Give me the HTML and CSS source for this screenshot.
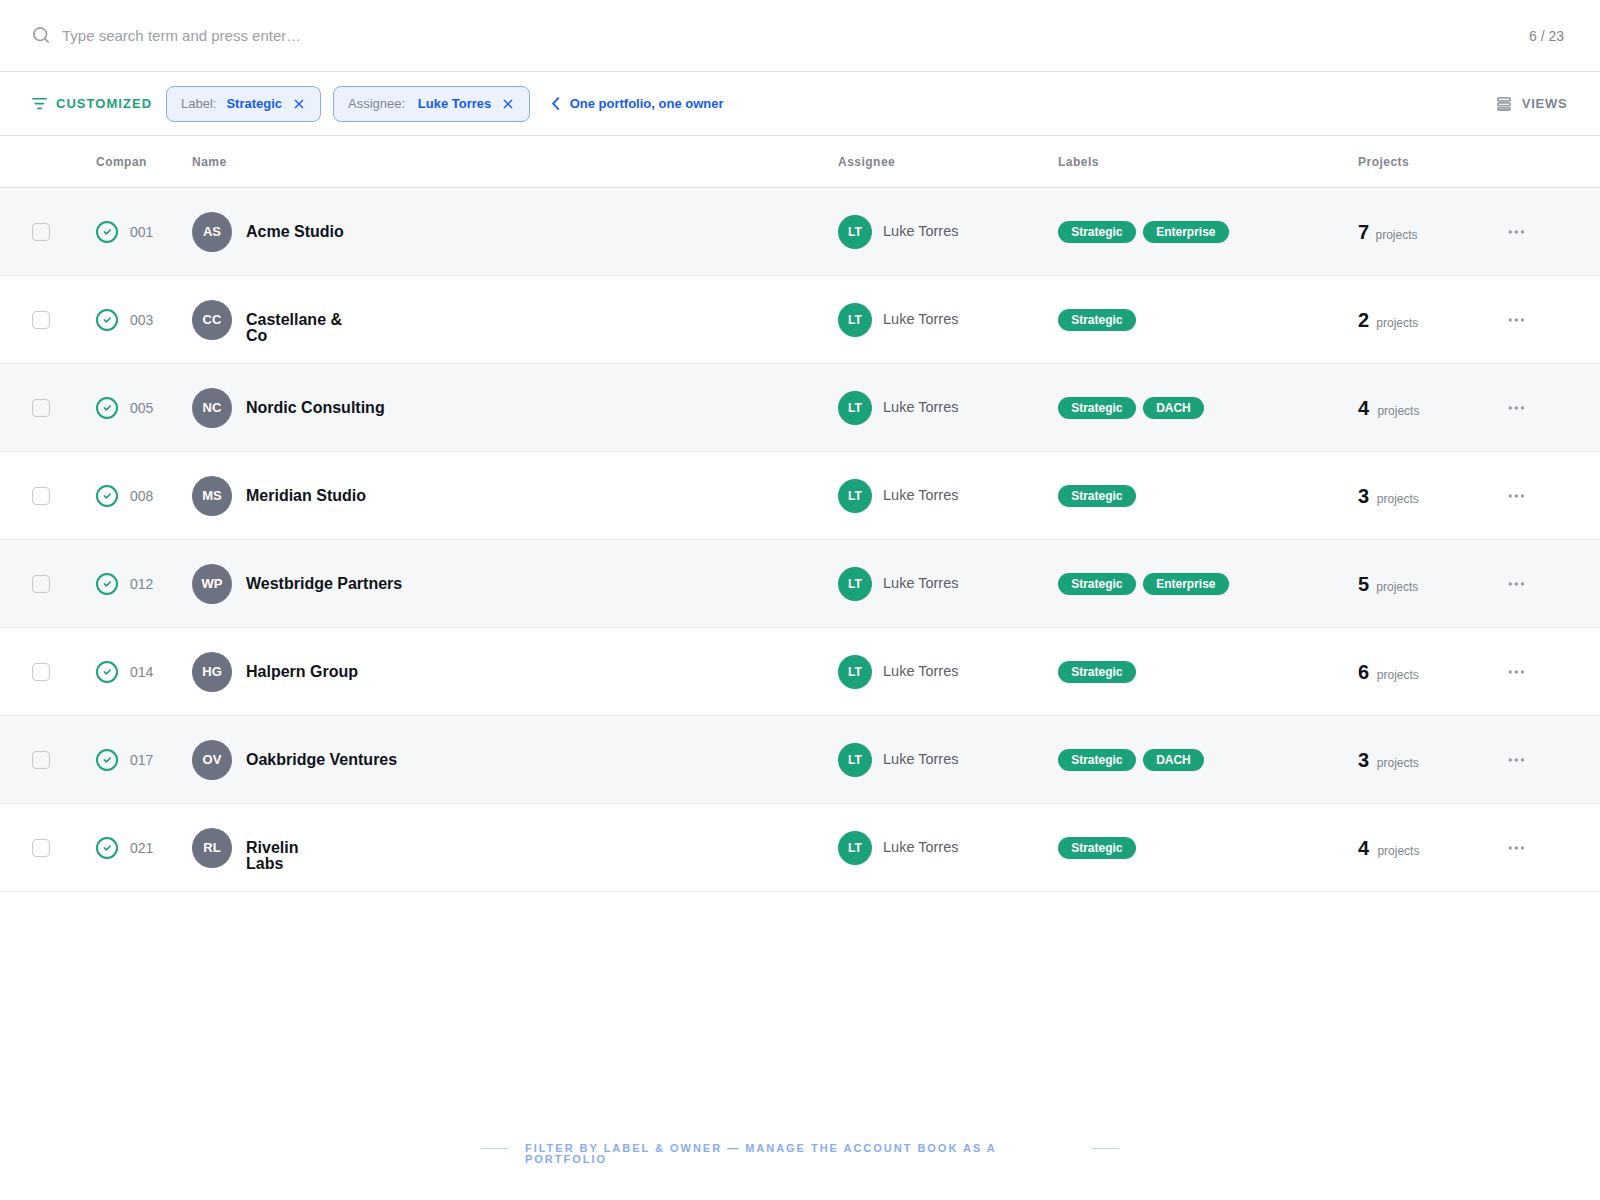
FILE: index.html
```html
<!DOCTYPE html>
<html lang="en">
<head>
  <meta charset="utf-8">
  <meta name="viewport" content="width=device-width">
  <title>Companies</title>
  <link rel="stylesheet" href="styles.css">
</head>
<body>
  <div class="search-bar">
    <svg class="search-icon" width="18" height="18" viewBox="0 0 18 18"><circle cx="7.2" cy="7.2" r="6.3"/><path d="M11.9 11.9L15.2 15.2"/></svg>
    <span class="placeholder">Type search term and press enter…</span>
    <span class="count">6 / 23</span>
  </div>

  <div class="filter-bar">
    <svg class="filter-icon" width="16" height="16" viewBox="0 0 16 16"><path d="M0.9 2.7h13.2M3.3 7.6h8.2M5.8 12.4h3.4"/></svg>
    <span class="customized">CUSTOMIZED</span>
    <div class="chip chip-label">
      <span class="key">Label:</span>
      <b>Strategic</b>
      <svg width="10" height="10" viewBox="0 0 10 10"><path d="M1 1l8 8M9 1l-8 8"/></svg>
    </div>
    <div class="chip chip-assignee">
      <span class="key">Assignee:</span>
      <b>Luke Torres</b>
      <svg width="10" height="10" viewBox="0 0 10 10"><path d="M1 1l8 8M9 1l-8 8"/></svg>
    </div>
    <svg class="back-icon" width="8" height="14" viewBox="0 0 8 14"><path d="M6.8 0.6L1.2 6.6l5.6 6"/></svg>
    <b class="hint">One portfolio, one owner</b>
    <svg class="views-icon" width="14" height="14" viewBox="0 0 14 14"><rect x="0.9" y="0.9" width="12.2" height="2.9" rx="1"/><rect x="0.9" y="5.8" width="12.2" height="2.9" rx="1"/><rect x="0.9" y="10.8" width="12.2" height="2.2" rx="1"/></svg>
    <span class="views">VIEWS</span>
  </div>

  <div class="table">
    <div class="row head">
      <span></span>
      <span>Compan</span>
      <span>Name</span>
      <span>Assignee</span>
      <span>Labels</span>
      <span>Projects</span>
      <span></span>
    </div>
  </div>

  <div class="footer">
    <i></i>
    <p>FILTER BY LABEL &amp; OWNER — MANAGE THE ACCOUNT BOOK AS A PORTFOLIO</p>
    <i></i>
  </div>

  <script>
  const companies = [
    { no: "001", initials: "AS", name: "Acme Studio", labels: ["Strategic", "Enterprise"], projects: 7 },
    { no: "003", initials: "CC", name: "Castellane &amp;<br>Co", labels: ["Strategic"], projects: 2 },
    { no: "005", initials: "NC", name: "Nordic Consulting", labels: ["Strategic", "DACH"], projects: 4 },
    { no: "008", initials: "MS", name: "Meridian Studio", labels: ["Strategic"], projects: 3 },
    { no: "012", initials: "WP", name: "Westbridge Partners", labels: ["Strategic", "Enterprise"], projects: 5 },
    { no: "014", initials: "HG", name: "Halpern Group", labels: ["Strategic"], projects: 6 },
    { no: "017", initials: "OV", name: "Oakbridge Ventures", labels: ["Strategic", "DACH"], projects: 3 },
    { no: "021", initials: "RL", name: "Rivelin<br>Labs", labels: ["Strategic"], projects: 4 },
  ];

  const table = document.querySelector(".table");

  companies.forEach(c => {
    const row = document.createElement("div");
    row.className = "row";
    row.innerHTML = `
      <span class="checkbox"></span>
      <div class="cell number">
        <svg width="22" height="22" viewBox="0 0 22 22"><circle cx="11" cy="11" r="10"/><path d="M8.4 10.9l2 2L14.4 9"/></svg>
        <span>${c.no}</span>
      </div>
      <div class="cell company">
        <span class="avatar">${c.initials}</span>
        <span class="name">${c.name}</span>
      </div>
      <div class="cell assignee">
        <span class="avatar small">LT</span>
        <span class="person">Luke Torres</span>
      </div>
      <div class="cell labels">${c.labels.map(l => `<span class="pill">${l}</span>`).join("")}</div>
      <div class="cell projects p${c.projects}"><b>${c.projects}</b><span>projects</span></div>
      <svg class="more" width="16" height="4" viewBox="0 0 16 4"><circle cx="2.2" cy="2" r="1.65"/><circle cx="8.3" cy="2" r="1.65"/><circle cx="14.4" cy="2" r="1.65"/></svg>`;
    table.appendChild(row);
  });
  </script>
</body>
</html>
```
FILE: styles.css
```css
*{
  box-sizing:border-box;
}
body{
  margin:0;
  height:1200px;
  background-color:#fff;
  font-family:"Liberation Sans", Arial, sans-serif;
  display:flex;
  flex-direction:column;
  overflow:hidden;
}
svg{
  fill:none;
  flex-shrink:0;
}
.search-bar{
  height:72px;
  padding:0 36px 0 32px;
  display:flex;
  align-items:center;
  border-bottom:1px solid #dddfe3;
}
.search-icon{
  stroke:#9ba0a9;
  stroke-width:1.7;
  stroke-linecap:round;
  margin-left:1px;
}
.placeholder{
  margin-left:11px;
  font-size:15px;
  color:#9ba0a9;
}
.count{
  margin-left:auto;
  font-size:14px;
  color:#80868f;
}
.filter-bar{
  height:64px;
  padding:0 32px;
  display:flex;
  align-items:center;
  border-bottom:1px solid #dddfe3;
  font-size:13px;
}
.filter-icon{
  stroke:#1ca27a;
  stroke-width:1.6;
  stroke-linecap:round;
}
.customized{
  width:110px;
  padding-left:8px;
  font-weight:bold;
  letter-spacing:1.04px;
  color:#1ca27a;
}
.chip{
  height:36px;
  margin-left:8px;
  padding-left:14px;
  display:flex;
  align-items:center;
  border:1px solid #86adf5;
  border-radius:8px;
  background-color:#ebf2fe;
}
.chip-label{
  width:155px;
}
.chip-assignee{
  width:197px;
  margin-left:12px;
}
.chip .key{
  color:#80868f;
}
.chip b{
  margin-left:10px;
  color:#155bf0;
}
.chip-assignee b{
  margin-left:12.7px;
}
.chip svg{
  margin-left:12px;
  stroke:#155bf0;
  stroke-width:1.4;
}
.back-icon{
  margin-left:22px;
  stroke:#155bf0;
  stroke-width:1.8;
}
.hint{
  margin-left:9.7px;
  color:#155bf0;
}
.views-icon{
  margin-left:auto;
  stroke:#9ba0a9;
  stroke-width:1.8;
}
.views{
  margin:0 0.5px 0 10.5px;
  font-weight:bold;
  letter-spacing:0.78px;
  color:#80868f;
}
.row{
  height:88px;
  padding:0 32px;
  display:grid;
  grid-template-columns:64px 96px 646px 220px 300px 150px 1fr;
  align-items:center;
  box-shadow:inset 0 -1px #e8eaed;
}
.row:nth-child(even){
  background-color:#f5f7f9;
}
.head{
  height:52px;
  box-shadow:inset 0 -1px #dddfe3;
  font-size:12px;
  font-weight:bold;
  letter-spacing:0.48px;
  color:#80868f;
}
.cell{
  display:flex;
  align-items:center;
}
.checkbox{
  width:18px;
  height:18px;
  border:1px solid #c5cad0;
  border-radius:4px;
}
.number{
  gap:12px;
  font-size:14px;
  color:#80868f;
}
.number svg{
  stroke:#1ca27a;
  stroke-width:2;
}
.number svg path{
  stroke-width:1.6;
  stroke-linecap:round;
  stroke-linejoin:round;
}
.avatar{
  width:40px;
  height:40px;
  border-radius:50%;
  background-color:#6c7280;
  color:#fff;
  font-size:13px;
  font-weight:bold;
  line-height:40px;
  text-align:center;
}
.small{
  width:34px;
  height:34px;
  background-color:#1ca27a;
  font-size:12px;
  line-height:34px;
}
.name{
  height:16px;
  margin-left:14px;
  font-size:16px;
  font-weight:bold;
  line-height:16px;
  color:#10141a;
}
.person{
  margin-left:11px;
  padding-bottom:2px;
  font-size:14.5px;
  color:#5b616c;
}
.labels{
  gap:7px;
}
.pill{
  height:22px;
  padding:0 13.4px 0 13.2px;
  border-radius:11px;
  background-color:#1ca27a;
  color:#fff;
  font-size:12px;
  font-weight:bold;
  line-height:22px;
}
.projects{
  align-items:baseline;
}
.projects b{
  font-size:20px;
  color:#10141a;
}
.projects span{
  margin-left:7.2px;
  font-size:12px;
  color:#80868f;
}
.p3 span,
.p6 span{
  margin-left:7.7px;
}
.p4 span{
  margin-left:8.3px;
}
.p7 span{
  margin-left:6.4px;
}
.more{
  fill:#969ca6;
}
.footer{
  margin-top:auto;
  padding-bottom:35px;
  display:flex;
  justify-content:center;
  gap:16px;
}
.footer i{
  width:28px;
  height:1px;
  margin-top:5px;
  background-color:#bfd6ee;
}
.footer p{
  width:550px;
  margin:0;
  font-size:11px;
  font-weight:bold;
  line-height:11px;
  letter-spacing:1.98px;
  color:#86abf8;
}
```
